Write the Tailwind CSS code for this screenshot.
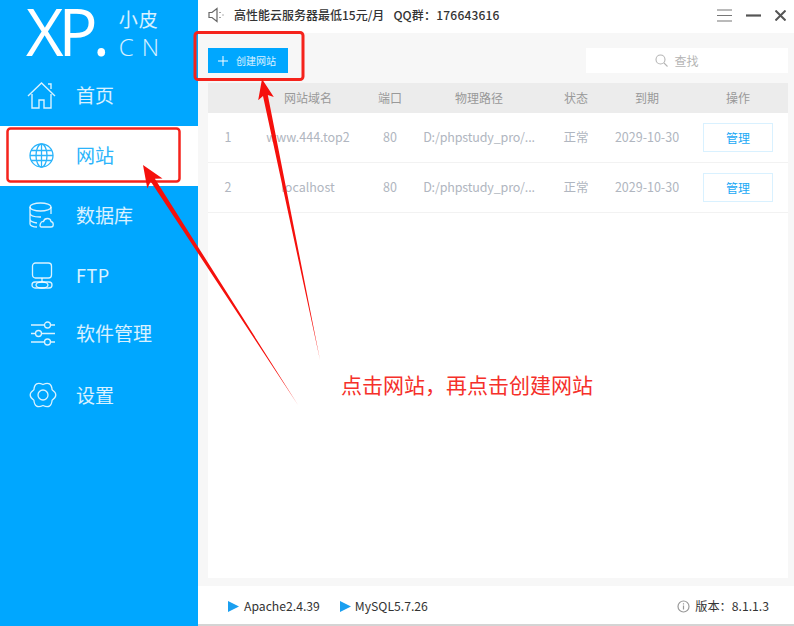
<!DOCTYPE html>
<html lang="zh-CN">
  <head>
    <meta charset="UTF-8" />
    <title>小皮面板</title>
    <script src="https://cdn.jsdelivr.net/npm/@tailwindcss/browser@4"></script>
  </head>
  <body class="bg-white">
    <div class="relative flex w-[794px] h-[626px] overflow-hidden font-['Noto_Sans_CJK_SC','Noto_Sans',sans-serif]">

      <!-- Sidebar -->
      <aside class="w-[198px] h-full bg-[#00a7ff] text-white/85 shrink-0">
        <div class="h-[66px] pl-[26px] flex items-start">
          <span class="font-['Open_Sans'] font-normal text-white text-[65px] leading-[66px] -mt-[2px] tracking-[-5px] whitespace-nowrap">XP.</span>
          <div class="ml-[14px] mt-[8px] w-[50px] shrink-0">
            <div class="text-[19px] leading-[22px] tracking-[1px]">小皮</div>
            <div class="font-['Open_Sans'] font-light text-[24px] leading-[24px] mt-[5px] tracking-[8px] whitespace-nowrap">CN</div>
          </div>
        </div>
        <a class="h-[60px] pb-[2px] pl-[27px] flex items-center gap-[20px] text-[19px]">
          <svg class="w-[29px] h-[29px]" viewBox="0 0 29 29" fill="none" stroke="currentColor" stroke-width="1.4"><path d="M1 15 14.5 2 28 15" /><path d="M5 13v14h7v-8h5v8h7V13" /><path d="M21 3h3v5" /></svg>
          首页
        </a>
        <a class="h-[60px] pb-[2px] pl-[29px] flex items-center gap-[22px] text-[19px] bg-white text-[#2bb4fb]">
          <svg class="w-[25px] h-[25px]" viewBox="0 0 25 25" fill="none" stroke="currentColor" stroke-width="1.3"><circle cx="12.5" cy="12.5" r="11.5" /><ellipse cx="12.5" cy="12.5" rx="5.5" ry="11.5" /><path d="M12.5 1v23M2 7.5h21M1 12.5h23M2 17.5h21" /></svg>
          网站
        </a>
        <a class="h-[60px] pb-[2px] pl-[29px] flex items-center gap-[22px] text-[19px]">
          <svg class="w-[25px] h-[26px]" viewBox="0 0 25 26" fill="none" stroke="currentColor" stroke-width="1.3"><ellipse cx="11.5" cy="5" rx="10.5" ry="4" /><path d="M1 5v17c0 1.500 3 3 7 3M22 5v7M1 11c0 2.500 4 4 10 4h1M1 17c0 2 3 3.500 7 4" /><path d="M12 25h10c3 0 3-5 0-5.500-.5-4-6.500-4-7.500 0-3-.5-4.500 4.500-2.500 5.500z" /></svg>
          数据库
        </a>
        <a class="h-[60px] pb-[2px] pl-[31px] flex items-center gap-[23px] text-[18px] tracking-[0.5px]">
          <svg class="w-[22px] h-[27px]" viewBox="0 0 22 27" fill="none" stroke="currentColor" stroke-width="1.3"><rect x="1.500" y="1" width="19" height="15" rx="3" /><path d="M11 16v4" /><rect x="1" y="20" width="20" height="6" rx="3" /><ellipse cx="11" cy="23" rx="6" ry="3" /></svg>
          FTP
        </a>
        <a class="h-[56px] pb-[2px] pl-[31px] flex items-center gap-[21px] text-[19px]">
          <svg class="w-[24px] h-[25px]" viewBox="0 0 24 25" fill="none" stroke="currentColor" stroke-width="1.3"><path d="M0 4h13M20 4h4M0 12.500h4M11 12.500h13M0 21h13M20 21h4" /><circle cx="16.500" cy="4" r="3" /><circle cx="7.500" cy="12.500" r="3" /><circle cx="16.500" cy="21" r="3" /></svg>
          软件管理
        </a>
        <a class="h-[68px] pb-[2px] pl-[29px] flex items-center gap-[19px] text-[19px]">
          <svg class="w-[28px] h-[26px]" viewBox="0 0 28 26" fill="none" stroke="currentColor" stroke-width="1.300"><path d="M23.100 7.750Q30.500 13 23.100 18.250 22.250 27.290 14 23.500 5.750 27.290 4.900 18.250-2.500 13 4.900 7.750 5.750-1.290 14 2.500 22.250-1.290 23.100 7.750z" /><circle cx="14" cy="13" r="5" /></svg>
          设置
        </a>
      </aside>

      <!-- Main -->
      <main class="flex-1 flex flex-col min-w-0">
        <header class="h-[33px] shrink-0 flex items-center pb-[3px] pl-[10px] pr-[8px] text-[#333] text-[12px] font-medium">
          <svg class="w-[17px] h-[16px] text-[#666]" viewBox="0 0 17 16" fill="none" stroke="currentColor" stroke-width="1.200"><path d="M1 5.500h3L9 1.500v13l-5-4H1z" /><path d="M12 5v1M12 10v1M14.500 8h1" /></svg>
          <span class="ml-[9px] whitespace-nowrap">高性能云服务器最低15元/月</span>
          <span class="ml-[9px] whitespace-nowrap tracking-[0.2px]">QQ群：176643616</span>
          <div class="ml-auto flex items-center gap-[14px]">
            <svg class="w-[15px] h-[13px]" viewBox="0 0 15 13" stroke="#777" stroke-width="1.200"><path d="M0 1h15M0 6.500h15M0 12h15" /></svg>
            <svg class="w-[15px] h-[3px]" viewBox="0 0 15 3" stroke="#555" stroke-width="2.200"><path d="M0 1.500h15" /></svg>
            <svg class="w-[11px] h-[11px]" viewBox="0 0 11 11" stroke="#555" stroke-width="2"><path d="M.5.500l10 10M10.500.500l-10 10" /></svg>
          </div>
        </header>

        <section class="flex-1 bg-[#f7f7f7] pl-[10px] pr-[6px] pt-[15px] pb-[8px] flex flex-col min-h-0">
          <div class="flex justify-between h-[25px] shrink-0">
            <button class="w-[80px] bg-[#00a7ff] text-white/85 text-[10px] flex items-center pl-[10px] gap-[8px]">
              <svg class="w-[10px] h-[10px]" viewBox="0 0 10 10" stroke="#fff" stroke-width="1"><path d="M5 0v10M0 5h10" /></svg>
              创建网站
            </button>
            <div class="w-[202px] bg-white flex items-center justify-center pr-[20px] gap-[6px] text-[12px] text-[#b5b5b5]">
              <svg class="w-[13px] h-[13px]" viewBox="0 0 13 13" fill="none" stroke="#b5b5b5" stroke-width="1.100"><circle cx="5.500" cy="5.500" r="4.500" /><path d="M9 9l3.500 3.500" /></svg>
              查找
            </div>
          </div>

          <div class="mt-[10px] flex-1 bg-white text-[12.500px] text-[#b0b6c0]">
            <div class="grid grid-cols-[40px_120px_44px_134px_60px_82px_100px] h-[30px] items-center text-center bg-[#ececec] text-[#999] text-[12px]">
              <span></span><span>网站域名</span><span>端口</span><span>物理路径</span><span>状态</span><span>到期</span><span>操作</span>
            </div>
            <div class="grid grid-cols-[40px_120px_44px_134px_60px_82px_100px] h-[50px] items-center text-center border-b border-[#f2f2f2]">
              <span>1</span><span>www.444.top2</span><span>80</span><span class="tracking-[-0.15px]">D:/phpstudy_pro/...</span><span>正常</span><span>2029-10-30</span>
              <span><a class="mx-auto block w-[70px] h-[29px] leading-[27px] border border-[#d9f1ff] text-[#1aa9f5] text-[12px]">管理</a></span>
            </div>
            <div class="grid grid-cols-[40px_120px_44px_134px_60px_82px_100px] h-[50px] items-center text-center border-b border-[#f2f2f2]">
              <span>2</span><span>localhost</span><span>80</span><span class="tracking-[-0.15px]">D:/phpstudy_pro/...</span><span>正常</span><span>2029-10-30</span>
              <span><a class="mx-auto block w-[70px] h-[29px] leading-[27px] border border-[#d9f1ff] text-[#1aa9f5] text-[12px]">管理</a></span>
            </div>
          </div>
        </section>

        <footer class="h-[40px] shrink-0 flex items-center pt-[3px] pl-[30px] pr-[25px] text-[12.200px] text-[#333] border-b-2 border-[#d4d4d4]">
          <svg class="w-[11px] h-[11px] mr-[5px]" viewBox="0 0 11 11" fill="#1a9ff0"><path d="M0 0l11 5.500L0 11z" /></svg>
          <span>Apache2.4.39</span>
          <svg class="w-[11px] h-[11px] ml-[20px] mr-[4px]" viewBox="0 0 11 11" fill="#1a9ff0"><path d="M0 0l11 5.500L0 11z" /></svg>
          <span>MySQL5.7.26</span>
          <span class="ml-auto flex items-center gap-[5px]">
            <svg class="w-[13px] h-[13px]" viewBox="0 0 13 13" fill="none" stroke="#999" stroke-width="1.200"><circle cx="6.500" cy="6.500" r="5.500" /><path d="M6.500 5.500v4M6.500 3.200v1.200" /></svg>
            版本：8.1.1.3
          </span>
        </footer>
      </main>

      <!-- Annotations -->
      <svg class="absolute inset-0 w-[794px] h-[626px] pointer-events-none" viewBox="0 0 794 626" fill="none">
        <rect x="7.500" y="128.500" width="172" height="53" rx="3" stroke="#f5231c" stroke-width="2.500" />
        <rect x="195" y="32.500" width="108" height="47" rx="3" stroke="#f5231c" stroke-width="3" />
        <polygon points="298,405 154.900,178.700 162.500,178.600 143,165 147.300,188.400 150.700,181.500" fill="#f5100c" />
        <polygon points="320,360 267.800,95.100 273.800,97 262,79 258.200,100.200 263,96.100" fill="#f5100c" />
      </svg>
      <div class="absolute left-[341px] top-[369px] text-[21px] leading-[30px] text-[#f5302a] whitespace-nowrap">点击网站，再点击创建网站</div>
    </div>
  </body>
</html>
